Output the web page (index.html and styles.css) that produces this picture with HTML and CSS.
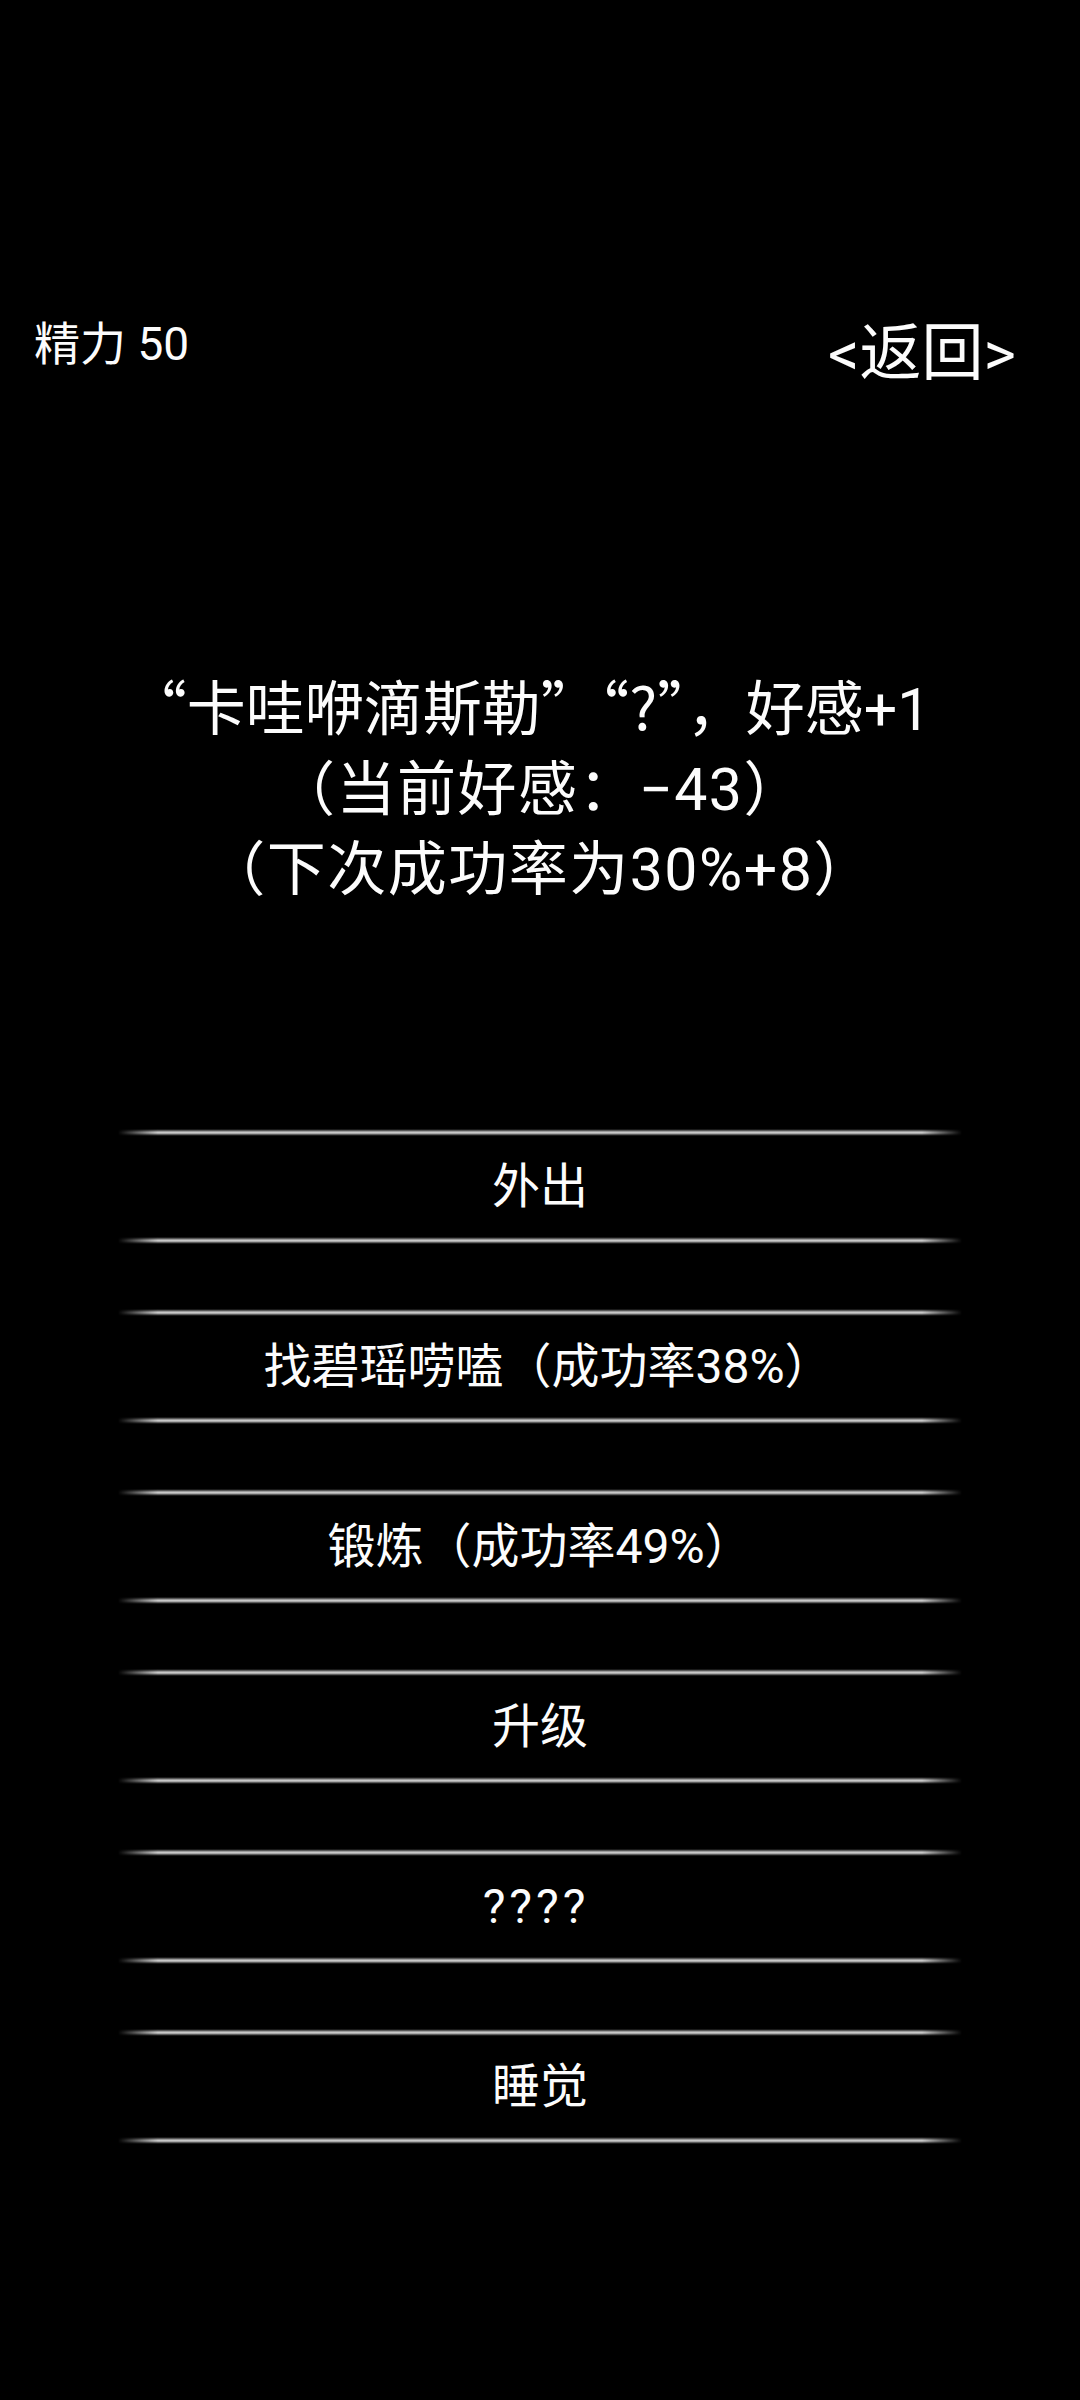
FILE: index.html
```html
<!DOCTYPE html>
<html lang="zh-CN">
<head>
<meta charset="utf-8">
<title>精力</title>
<link rel="stylesheet" href="styles.css">
</head>
<body>
<div class="screen">
  <header class="topbar">
    <div class="energy">精力 50</div>
    <div class="back">&lt;返回&gt;</div>
  </header>
  <section class="message">
    <p class="msg-line msg-first">“卡哇咿滴斯勒”“?”，好感<span class="num">+1</span></p>
    <p class="msg-line msg-spaced">（当前好感：<span class="num">−43</span>）</p>
    <p class="msg-line msg-spaced">（下次成功率为<span class="num">30%+8</span>）</p>
  </section>
  <nav class="menu">
    <div class="item"><div class="rule"></div><div class="label">外出</div><div class="rule"></div></div>
    <div class="item"><div class="rule"></div><div class="label label-shift">找碧瑶唠嗑（成功率38%）</div><div class="rule"></div></div>
    <div class="item"><div class="rule"></div><div class="label">锻炼（成功率49%）</div><div class="rule"></div></div>
    <div class="item"><div class="rule"></div><div class="label">升级</div><div class="rule"></div></div>
    <div class="item"><div class="rule"></div><div class="label label-wide">????</div><div class="rule"></div></div>
    <div class="item"><div class="rule"></div><div class="label">睡觉</div><div class="rule"></div></div>
  </nav>
</div>
</body>
</html>
```
FILE: styles.css
```css
html, body {
  margin: 0;
  padding: 0;
  background: #000;
}
body {
  width: 1080px;
  height: 2400px;
  overflow: hidden;
  color: #fcfcfc;
  font-family: Roboto, "Noto Sans CJK SC", sans-serif;
}
.screen {
  display: flex;
  flex-direction: column;
}
.topbar {
  display: flex;
  justify-content: space-between;
  align-items: flex-start;
  height: 56px;
  padding: 321px 64px 0 34px;
}
.energy {
  font-size: 46px;
  line-height: 1;
}
.back {
  margin-top: 2px;
  font-size: 62px;
  line-height: 1;
}
.message {
  margin-top: 288px;
  text-align: center;
}
.msg-line {
  margin: 0;
  font-family: "Noto Sans CJK SC", sans-serif;
  font-size: 59px;
  line-height: 80px;
}
.msg-first {
  padding-right: 22px;
}
.msg-spaced {
  letter-spacing: 1.5px;
}
.num {
  font-family: Roboto, "Noto Sans CJK SC", sans-serif;
  line-height: 1;
}
.menu {
  margin-top: 224px;
  display: flex;
  flex-direction: column;
  gap: 65px;
}
.item {
  display: flex;
  flex-direction: column;
  align-items: center;
}
.rule {
  width: 844px;
  height: 7px;
  background: linear-gradient(to bottom, rgba(0,0,0,0) 0%, #333 14%, #808080 30%, #c8c8c8 45%, #c8c8c8 58%, #808080 72%, #333 86%, rgba(0,0,0,0) 100%);
  -webkit-mask-image: linear-gradient(to right, transparent 0, #000 40px, #000 804px, transparent 844px);
  mask-image: linear-gradient(to right, transparent 0, #000 40px, #000 804px, transparent 844px);
}
.label {
  height: 101px;
  display: flex;
  align-items: center;
  justify-content: center;
  font-size: 48px;
  line-height: 1;
}
.label-shift {
  padding-left: 16px;
}
.label-wide {
  letter-spacing: 4px;
  padding-right: 8px;
}
```
